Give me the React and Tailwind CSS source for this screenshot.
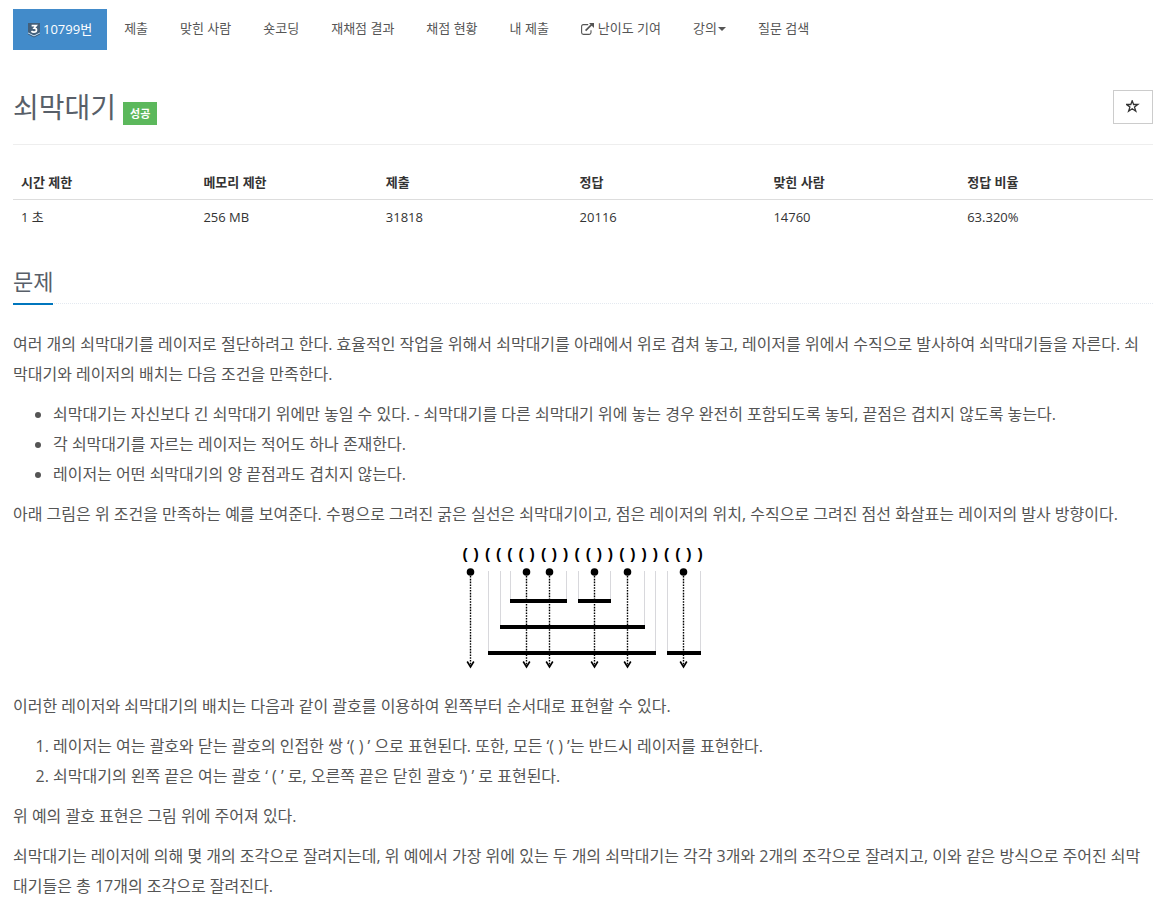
import React from 'react';

const menus = ['제출', '맞힌 사람', '숏코딩', '재채점 결과', '채점 현황', '내 제출'];

const stats = [
  { label: '시간 제한', value: '1 초', width: 'w-[16%]' },
  { label: '메모리 제한', value: '256 MB', width: 'w-[16%]' },
  { label: '제출', value: '31818', width: 'w-[17%]' },
  { label: '정답', value: '20116', width: 'w-[17%]' },
  { label: '맞힌 사람', value: '14760', width: 'w-[17%]' },
  { label: '정답 비율', value: '63.320%', width: 'w-[17%]' },
];

const brackets = '()(((()())(())()))(())';
const lasers = [12, 68, 91, 136, 169, 225];
const bars = [
  { from: 52, to: 109, y: 62 },
  { from: 120, to: 153, y: 62 },
  { from: 42, to: 187, y: 88 },
  { from: 30, to: 198, y: 114 },
  { from: 209, to: 243, y: 114 },
];

const TierBadge = () => (
  <svg width="12" height="16" viewBox="0 0 12 16" aria-hidden="true">
    <path d="M0 1H12V10.5L6 13.5L0 10.5Z" fill="#435f7a" />
    <path d="M0 10.5L6 13.5L12 10.5V11.6L6 14.6L0 11.6Z" fill="#dbe6f0" />
    <path d="M0 11.6L6 14.6L12 11.6V12.6L6 15.6L0 12.6Z" fill="#435f7a" />
    <path d="M3.6 3.6H8.2L6.2 6.1C7.8 6.1 8.5 7 8.5 8C8.5 9.3 7.4 10.1 6 10.1C4.9 10.1 4 9.8 3.4 9.1" fill="none" stroke="#fff" strokeWidth="1.7" />
  </svg>
);

const ExternalIcon = () => (
  <svg width="13" height="12" viewBox="0 0 13 12" fill="none" stroke="currentColor" aria-hidden="true">
    <path d="M7.2 1.6H2.4Q0.6 1.6 0.6 3.4V9.6Q0.6 11.4 2.4 11.4H8.2Q10 11.4 10 9.6V7.2" strokeWidth="1.1" />
    <path d="M4.6 7.6L10.6 1.6" strokeWidth="1.7" />
    <path d="M8 0H13V5Z" fill="currentColor" stroke="none" />
  </svg>
);

const NavItem = ({ children }) => (
  <li>
    <a href="#" className="flex items-center px-[15px] pt-[9px] pb-[11px] leading-[21px]">
      {children}
    </a>
  </li>
);

const SticksFigure = () => (
  <svg width="250" height="142" viewBox="0 0 250 142" role="img" aria-label="쇠막대기와 레이저의 배치">
    {brackets.split('').map((char, i) => (
      <text key={i} x={7 + i * 11.2} y="20" textAnchor="middle" className="fill-black font-['Liberation_Sans'] text-[15px] font-bold">
        {char}
      </text>
    ))}
    {bars.map((bar) => (
      <g key={bar.from}>
        <path d={`M${bar.from + 0.5} 32V${bar.y}M${bar.to - 0.5} 32V${bar.y}`} stroke="#d8d8dc" />
        <path d={`M${bar.from} ${bar.y}H${bar.to}`} stroke="#000" strokeWidth="4" />
      </g>
    ))}
    {lasers.map((x) => (
      <g key={x}>
        <circle cx={x + 0.5} cy="33" r="3.8" />
        <path d={`M${x + 0.5} 37V126`} stroke="#000" strokeWidth="1.4" strokeDasharray="1.6 1.2" />
        <path d={`M${x - 2.8} 122.5L${x + 0.5} 128L${x + 3.8} 122.5`} fill="none" stroke="#000" strokeWidth="1.6" />
      </g>
    ))}
  </svg>
);

const App = () => {
  return (
    <div className="bg-white pt-[9px] pr-[14px] pl-[13px] font-['Open_Sans','Noto_Sans_CJK_KR',sans-serif] text-[13px] text-[#555]">
      <nav>
        <ul className="flex flex-wrap gap-[2px]">
          <li>
            <a href="#" className="flex items-center gap-[3px] bg-[#428bca] px-[15px] py-[10px] leading-[21px] text-white">
              <TierBadge />
              10799번
            </a>
          </li>
          {menus.map((menu) => (
            <NavItem key={menu}>{menu}</NavItem>
          ))}
          <NavItem>
            <span className="mr-1"><ExternalIcon /></span>
            난이도 기여
          </NavItem>
          <NavItem>
            강의
            <span className="ml-px border-x-4 border-t-4 border-x-transparent border-t-[#555]" />
          </NavItem>
          <NavItem>질문 검색</NavItem>
        </ul>
      </nav>

      <header className="mt-10 flex items-start justify-between border-b border-[#eee] pb-[19px]">
        <div className="flex items-end gap-[7px]">
          <h1 className="text-[28px] leading-[35px] text-[#585f69]">쇠막대기</h1>
          <span className="bg-[#5cb85c] px-[7px] text-[11px] leading-[23px] font-bold text-white">성공</span>
        </div>
        <button type="button" aria-label="즐겨찾기" className="flex h-[34px] w-10 items-center justify-center border border-[#ccc] text-[#333]">
          <svg width="14" height="14" viewBox="0.8 0.8 14 14" fill="none" stroke="currentColor" strokeWidth="1.3" aria-hidden="true">
            <path d="M7 1.5L8.4 5.3H12.7L9.3 7.9L10.6 12L7 9.5L3.4 12L4.7 7.9L1.3 5.3H5.6Z" />
          </svg>
        </button>
      </header>

      <table className="mt-5 w-full table-fixed text-left leading-[18px] text-[#333]">
        <thead>
          <tr className="border-b border-[#ddd]">
            {stats.map((stat) => (
              <th key={stat.label} className={`${stat.width} p-2 font-bold`}>{stat.label}</th>
            ))}
          </tr>
        </thead>
        <tbody>
          <tr>
            {stats.map((stat) => (
              <td key={stat.label} className="p-2">{stat.value}</td>
            ))}
          </tr>
        </tbody>
      </table>

      <section>
        <div className="mt-[31px] flex border-b border-dotted border-[#e4e9f0]">
          <h2 className="-mb-[2px] border-b-2 border-[#0076bd] pb-[5px] text-[22px] leading-[33px] text-[#585f69]">문제</h2>
        </div>

        <div className="mt-[25px] flex flex-col gap-[10px] text-base leading-[30px]">
          <p>
            여러 개의 쇠막대기를 레이저로 절단하려고 한다. 효율적인 작업을 위해서 쇠막대기를 아래에서 위로 겹쳐 놓고, 레이저를 위에서 수직으로 발사하여 쇠막대기들을 자른다. 쇠막대기와 레이저의 배치는 다음 조건을 만족한다.
          </p>
          <ul className="list-disc pl-10">
            <li>쇠막대기는 자신보다 긴 쇠막대기 위에만 놓일 수 있다. - 쇠막대기를 다른 쇠막대기 위에 놓는 경우 완전히 포함되도록 놓되, 끝점은 겹치지 않도록 놓는다.</li>
            <li>각 쇠막대기를 자르는 레이저는 적어도 하나 존재한다.</li>
            <li>레이저는 어떤 쇠막대기의 양 끝점과도 겹치지 않는다.</li>
          </ul>
          <p>
            아래 그림은 위 조건을 만족하는 예를 보여준다. 수평으로 그려진 굵은 실선은 쇠막대기이고, 점은 레이저의 위치, 수직으로 그려진 점선 화살표는 레이저의 발사 방향이다.
          </p>
          <div className="flex justify-center">
            <SticksFigure />
          </div>
          <p>이러한 레이저와 쇠막대기의 배치는 다음과 같이 괄호를 이용하여 왼쪽부터 순서대로 표현할 수 있다.</p>
          <ol className="list-decimal pl-10">
            <li>레이저는 여는 괄호와 닫는 괄호의 인접한 쌍 ‘( ) ’ 으로 표현된다. 또한, 모든 ‘( ) ’는 반드시 레이저를 표현한다.</li>
            <li>쇠막대기의 왼쪽 끝은 여는 괄호 ‘ ( ’ 로, 오른쪽 끝은 닫힌 괄호 ‘) ’ 로 표현된다.</li>
          </ol>
          <p>위 예의 괄호 표현은 그림 위에 주어져 있다.</p>
          <p>
            쇠막대기는 레이저에 의해 몇 개의 조각으로 잘려지는데, 위 예에서 가장 위에 있는 두 개의 쇠막대기는 각각 3개와 2개의 조각으로 잘려지고, 이와 같은 방식으로 주어진 쇠막대기들은 총 17개의 조각으로 잘려진다.
          </p>
        </div>
      </section>
    </div>
  );
};

export default App;
